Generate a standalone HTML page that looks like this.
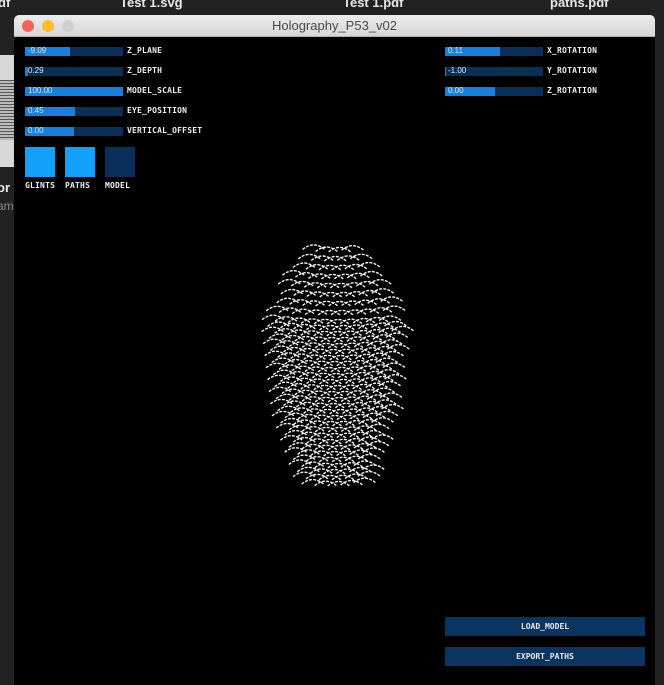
<!DOCTYPE html>
<html><head><meta charset="utf-8"><style>
*{margin:0;padding:0;box-sizing:border-box}
body{width:664px;height:675px;background:#222;position:relative;overflow:hidden;font-family:"Liberation Sans",sans-serif}
.tab{position:absolute;top:-5px;color:#e8e8e8;font-size:13px;font-weight:bold}
#win{position:absolute;left:14px;top:15px;width:641px;height:670px;background:#000;border-radius:5px 5px 0 0;overflow:hidden}
#tb{height:22px;background:linear-gradient(#ececec,#d6d6d6);border-bottom:1px solid #b0b0b0;text-align:center;font-size:13px;line-height:22px;color:#4a4a4a}
.dot{position:absolute;top:5px;width:12px;height:12px;border-radius:50%}
.s{position:absolute;height:9px;width:98px;background:#0a2f5a}
.s i{position:absolute;left:0;top:0;bottom:0;background:#1580df}
.s b{position:absolute;left:3px;top:-1px;font:normal 8px "Liberation Sans",sans-serif;color:#cfe6ff}
.l{position:absolute;font:bold 8px "DejaVu Sans Mono","Liberation Mono",monospace;color:#f0f0f0;letter-spacing:0.2px}
.t{position:absolute;width:30px;height:30px}
.btn{position:absolute;left:431px;width:200px;height:19px;background:#0a3462;color:#e8e8e8;font:bold 8px "DejaVu Sans Mono",monospace;text-align:center;line-height:19px}
</style></head><body>
<div class="tab" style="left:-2px">df</div>
<div class="tab" style="left:120px">Test 1.svg</div>
<div class="tab" style="left:343px">Test 1.pdf</div>
<div class="tab" style="left:550px">paths.pdf</div>
<div style="position:absolute;left:0;top:55px;width:14px;height:112px;background:#d8d8d8"></div>
<div style="position:absolute;left:0;top:80px;width:14px;height:60px;background:repeating-linear-gradient(#555 0 1px,#bbb 1px 3px)"></div>
<div style="position:absolute;left:-3px;top:180px;color:#eee;font-weight:bold;font-size:13px">or</div>
<div style="position:absolute;left:-3px;top:199px;color:#888;font-size:12px">am</div>
<div id="win">
<div id="tb">Holography_P53_v02</div>
<div class="dot" style="left:8px;background:#fc5f57"></div>
<div class="dot" style="left:28px;background:#fdbc2e"></div>
<div class="dot" style="left:48px;background:#cfcfcf"></div>

<div class="s" style="left:11px;top:32px"><i style="width:45px"></i><b>-9.09</b></div><div class="l" style="left:113px;top:31px">Z_PLANE</div>
<div class="s" style="left:11px;top:52px"><i style="width:3px"></i><b>0.29</b></div><div class="l" style="left:113px;top:51px">Z_DEPTH</div>
<div class="s" style="left:11px;top:72px"><i style="width:98px"></i><b>100.00</b></div><div class="l" style="left:113px;top:71px">MODEL_SCALE</div>
<div class="s" style="left:11px;top:92px"><i style="width:50px"></i><b>0.45</b></div><div class="l" style="left:113px;top:91px">EYE_POSITION</div>
<div class="s" style="left:11px;top:112px"><i style="width:49px"></i><b>0.00</b></div><div class="l" style="left:113px;top:111px">VERTICAL_OFFSET</div>

<div class="t" style="left:11px;top:132px;background:#12a0fb"></div><div class="l" style="left:11px;top:166px">GLINTS</div>
<div class="t" style="left:51px;top:132px;background:#12a0fb"></div><div class="l" style="left:51px;top:166px">PATHS</div>
<div class="t" style="left:91px;top:132px;background:#0a2f5a"></div><div class="l" style="left:91px;top:166px">MODEL</div>

<div class="s" style="left:431px;top:32px"><i style="width:55px"></i><b>0.11</b></div><div class="l" style="left:533px;top:31px">X_ROTATION</div>
<div class="s" style="left:431px;top:52px"><i style="width:1px"></i><b>-1.00</b></div><div class="l" style="left:533px;top:51px">Y_ROTATION</div>
<div class="s" style="left:431px;top:72px"><i style="width:50px"></i><b>0.00</b></div><div class="l" style="left:533px;top:71px">Z_ROTATION</div>

<svg id="h" style="position:absolute;left:0;top:0" width="641" height="670"></svg>

<div class="btn" style="top:602px">LOAD_MODEL</div>
<div class="btn" style="top:632px">EXPORT_PATHS</div>
</div>
<script>
var s=document.getElementById('h'),d='',d2='';
var cx=321;
function wf(y){ // half width as function of y (page coords)
 if(y<262) return 30+(y-250)*1.2;
 if(y<330) return 45+(y-262)*0.45;
 if(y<420) return 74-(y-330)*0.12;
 return 63-(y-420)*0.35;}
for(var y=252;y<=488;y+=y<320?9:6){
 var w=wf(y),aw=22,step=13;
 var n=Math.floor(2*w/step);
 var off=((y/6)|0)%2?step/2:0;
 for(var j=0;j<n;j++){var x=cx-w+off+j*step;if(x+aw>cx+w+6)break;
  var yy=y-15+Math.pow((x+aw/2-cx)/w,2)*-6;
  d+='M'+x.toFixed(1)+' '+yy.toFixed(1)+'q'+(aw/2)+' -9 '+aw+' 0';}
}
s.innerHTML='<path d="'+d+'" fill="none" stroke="#f4f4f4" stroke-width="1.4" stroke-dasharray="3 1.2"/>';
</script>
</body></html>
